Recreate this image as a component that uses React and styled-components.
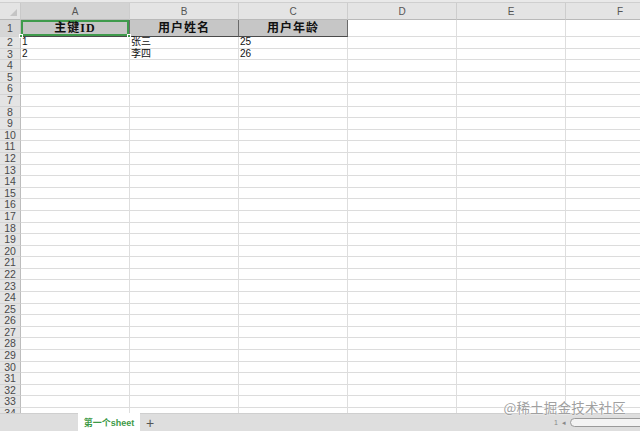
import React from "react";
import styled, { createGlobalStyle, css } from "styled-components";

const COLS = ["A", "B", "C", "D", "E", "F"];
const TEMPLATE = "21px repeat(6, 109px)";
const ROW_H = 11.6;

const data = {
  1: ["主键ID", "用户姓名", "用户年龄"],
  2: ["1", "张三", "25"],
  3: ["2", "李四", "26"],
};

const Global = createGlobalStyle`
  html, body { margin: 0; padding: 0; overflow: hidden; background: #fff; }
  * { box-sizing: border-box; }
`;

const Frame = styled.div`
  position: relative;
  width: 640px;
  height: 431px;
  display: flex;
  flex-direction: column;
  overflow: hidden;
  font-family: "Liberation Sans", "Noto Sans CJK SC", sans-serif;
`;

const TopStrip = styled.div`
  height: 3px;
  flex: none;
  background: #e9e9e9;
  border-bottom: 1px solid #cfcfcf;
`;

const Sheet = styled.div`
  flex: 1;
  overflow: hidden;
  display: flex;
  flex-direction: column;
`;

const Row = styled.div`
  display: grid;
  grid-template-columns: ${TEMPLATE};
  height: ${(p) => p.h}px;
  flex: none;
`;

const Corner = styled.div`
  position: relative;
  background: #e4e4e4;
  border-right: 1px solid #c9c9c9;
  border-bottom: 1px solid #b9b9b9;
  &::after {
    content: "";
    position: absolute;
    right: 3px;
    bottom: 3px;
    border-left: 7px solid transparent;
    border-bottom: 7px solid #c4c4c4;
  }
`;

const ColHead = styled.div`
  display: flex;
  align-items: center;
  justify-content: center;
  font-size: 10px;
  color: #555;
  background: ${(p) => (p.active ? "#d3d3d3" : "#e4e4e4")};
  border-right: 1px solid #cdcdcd;
  border-bottom: 1px solid #b9b9b9;
`;

const RowHead = styled.div`
  display: flex;
  align-items: center;
  justify-content: center;
  font-size: 10.5px;
  line-height: 1;
  color: #4a4a4a;
  background: ${(p) => (p.active ? "#d6d6d6" : "#e4e4e4")};
  border-right: 1px solid #bdbdbd;
  border-bottom: 1px solid #d4d4d4;
`;

const Cell = styled.div`
  position: relative;
  display: flex;
  align-items: center;
  padding-left: 1px;
  font-size: 10px;
  line-height: 1;
  color: #111;
  white-space: nowrap;
  border-right: 1px solid #dedede;
  border-bottom: 1px solid #dcdcdc;
  font-family: "Liberation Sans", "Noto Sans CJK SC", sans-serif;

  ${(p) =>
    p.title &&
    css`
      justify-content: center;
      padding-left: 0;
      background: #c6c6c6;
      font-size: 12px;
      font-weight: 700;
      letter-spacing: 1px;
      font-family: "Liberation Serif", "Noto Sans CJK SC", serif;
      border-right: 1px solid #6a6a6a;
      border-bottom: 1px solid #4a4a4a;
    `}

  ${(p) =>
    p.selected &&
    css`
      box-shadow: inset 0 0 0 2px #3f9b4c;
    `}

  ${(p) =>
    p.flag &&
    css`
      &::before {
        content: "";
        position: absolute;
        left: 0;
        top: 0;
        border-top: 3px solid #2f6f36;
        border-right: 3px solid transparent;
      }
    `}
`;

const Handle = styled.span`
  position: absolute;
  width: 4px;
  height: 4px;
  background: #3f9b4c;
  border: 1px solid #fff;
  ${(p) => (p.side === "right" ? "right: -2px;" : "left: -2px;")}
  bottom: -2px;
  z-index: 2;
`;

const TabBar = styled.div`
  height: 18px;
  flex: none;
  display: flex;
  align-items: stretch;
  background: #dedede;
  border-top: 1px solid #cfcfcf;
`;

const TabSpacer = styled.div`
  width: 78px;
`;

const Tab = styled.div`
  width: 62px;
  display: flex;
  align-items: center;
  justify-content: center;
  background: #fff;
  color: #3d9a47;
  font-size: 9px;
  font-weight: 700;
  margin-top: -1px;
`;

const AddTab = styled.div`
  width: 20px;
  display: flex;
  align-items: center;
  justify-content: center;
  color: #555;
  font-size: 14px;
  font-weight: 300;
`;

const Status = styled.div`
  margin-left: auto;
  display: flex;
  align-items: center;
  gap: 4px;
  padding-right: 0;
  font-size: 7px;
  color: #888;
`;

const Scroll = styled.div`
  width: 80px;
  height: 9px;
  margin-right: -10px;
  border: 1px solid #9a9a9a;
  border-radius: 5px;
  background: #f3f3f3;
`;

const Watermark = styled.div`
  position: absolute;
  right: 14px;
  bottom: 14px;
  font-size: 13.5px;
  color: #a0a0a0;
  font-family: "Noto Sans CJK SC", sans-serif;
  text-shadow: 0 0 2px #fff, 0 0 1px #fff;
  letter-spacing: 0.2px;
`;

const rowCount = 34;

export default function App() {
  return (
    <Frame>
      <Global />
      <TopStrip />
      <Sheet>
        <Row h={17}>
          <Corner />
          {COLS.map((c, i) => (
            <ColHead key={c} active={i === 0}>
              {c}
            </ColHead>
          ))}
        </Row>
        {Array.from({ length: rowCount }, (_, r) => {
          const n = r + 1;
          const vals = data[n] || [];
          const isTitle = n === 1;
          return (
            <Row key={n} h={isTitle ? 17 : ROW_H}>
              <RowHead active={isTitle}>{n}</RowHead>
              {COLS.map((c, i) => {
                const v = vals[i];
                const title = isTitle && i < 3;
                const selected = isTitle && i === 0;
                const flag = !isTitle && v && (i === 0 || i === 2);
                return (
                  <Cell key={c} title={title ? 1 : 0} selected={selected} flag={flag}>
                    {v}
                    {selected && <Handle side="right" />}
                    {selected && <Handle side="left" />}
                  </Cell>
                );
              })}
            </Row>
          );
        })}
      </Sheet>
      <TabBar>
        <TabSpacer />
        <Tab>第一个sheet</Tab>
        <AddTab>+</AddTab>
        <Status>
          <span>1</span>
          <span>◂</span>
          <Scroll />
        </Status>
      </TabBar>
      <Watermark>@稀土掘金技术社区</Watermark>
    </Frame>
  );
}
